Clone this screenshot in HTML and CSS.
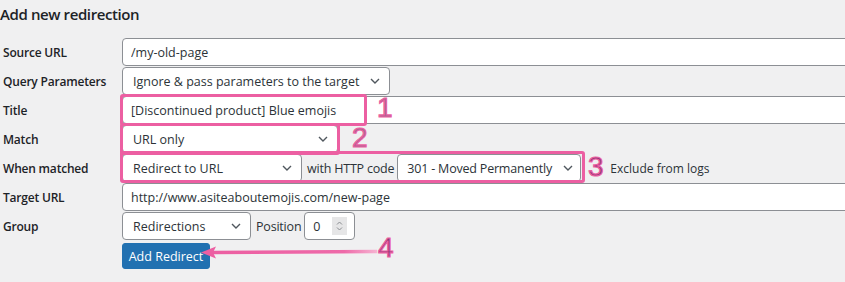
FILE: index.html
```
<!DOCTYPE html>
<html lang="en">
<head>
    <meta charset="UTF-8">
    <meta name="viewport" content="width=device-width, initial-scale=1.0">
    <title>Add new redirection</title>
    <link rel="stylesheet" href="styles.css">
</head>
<body>
    <div class="page">
        <h2 class="heading">Add new redirection</h2>

        <div class="form">
            <label class="label">Source URL</label>
            <div class="field"><input type="text" class="text wide" value="/my-old-page"></div>

            <label class="label">Query Parameters</label>
            <div class="field">
                <select class="select queryParams"><option>Ignore &amp; pass parameters to the target</option></select>
            </div>

            <label class="label">Title</label>
            <div class="field"><input type="text" class="text wide" value="[Discontinued product] Blue emojis"></div>

            <label class="label">Match</label>
            <div class="field">
                <select class="select matchType"><option>URL only</option></select>
            </div>

            <label class="label">When matched</label>
            <div class="field">
                <select class="select actionType"><option>Redirect to URL</option></select>
                <span class="inline">with HTTP code</span>
                <select class="select httpCode"><option>301 - Moved Permanently</option></select>
                <span class="exclude">Exclude from logs</span>
            </div>

            <label class="label">Target URL</label>
            <div class="field"><input type="text" class="text wide" value="http://www.asiteaboutemojis.com/new-page"></div>

            <label class="label">Group</label>
            <div class="field">
                <select class="select groupSelect"><option>Redirections</option></select>
                <span class="inline">Position</span>
                <div class="number">
                    <span>0</span>
                    <svg class="spinner" width="15" height="18" viewBox="0 0 15 18">
                        <rect width="15" height="18" fill="#e6e6e7"/>
                        <path d="M5 7.5 L7.5 5 L10 7.5" fill="none" stroke="#8a8d91" stroke-width="1"/>
                        <path d="M5 10.5 L7.5 13 L10 10.5" fill="none" stroke="#8a8d91" stroke-width="1"/>
                    </svg>
                </div>
            </div>

            <span></span>
            <div class="field buttonRow"><button class="button">Add Redirect</button></div>
        </div>

        <!-- annotations drawn over the form -->
        <div class="mark markTitle"></div>
        <div class="mark markMatch"></div>
        <div class="mark markAction"></div>
        <span class="num num1">1</span>
        <span class="num num2">2</span>
        <span class="num num3">3</span>
        <span class="num num4">4</span>
        <svg class="arrow" width="180" height="14" viewBox="0 0 180 14">
            <defs>
                <linearGradient id="fade" x1="0" x2="1" y1="0" y2="0">
                    <stop offset="0" stop-color="#ec5fa2"/>
                    <stop offset="0.8" stop-color="#ee6aa9"/>
                    <stop offset="1" stop-color="#f6b3d2"/>
                </linearGradient>
            </defs>
            <path d="M12 6.5 L176 5.5" stroke="url(#fade)" stroke-width="3.5" fill="none"/>
            <path d="M0 6.5 L15 0.5 L12 6.5 L15 12.5 Z" fill="#ec5fa2"/>
        </svg>
    </div>
</body>
</html>
```

FILE: styles.css
```
body {
    margin: 0;
    background-color: #f0f0f1;
    font-family: "Open Sans", "Noto Sans", sans-serif;
    color: #1d2327;
}

.page {
    position: relative;
    width: 845px;
    height: 282px;
    overflow: hidden;
}

.heading {
    margin: 0 0 10px 0;
    height: 28px;
    line-height: 28px;
    font-size: 15px;
    font-weight: 600;
    letter-spacing: -0.4px;
}

.form {
    display: grid;
    grid-template-columns: 122px 1fr;
    row-gap: 1px;
    align-items: center;
}

.label {
    padding-left: 3px;
    font-size: 12px;
    font-weight: 600;
    letter-spacing: -0.2px;
}

.field {
    display: flex;
    align-items: center;
    height: 28px;
}

.text,
.select {
    box-sizing: border-box;
    height: 28px;
    border: 1px solid #8c8f94;
    border-radius: 4px;
    background-color: #fff;
    font-family: inherit;
    font-size: 12.5px;
    color: #2c3338;
    padding: 0 8px;
    margin: 0;
}

.wide {
    width: 760px;
}

.select {
    -webkit-appearance: none;
    appearance: none;
    padding-left: 10px;
    padding-right: 24px;
    background-image: url("data:image/svg+xml,%3Csvg xmlns='http://www.w3.org/2000/svg' width='10' height='6' viewBox='0 0 10 6'%3E%3Cpath d='M1 1 L5 5 L9 1' fill='none' stroke='%2350575e' stroke-width='1.4'/%3E%3C/svg%3E");
    background-repeat: no-repeat;
    background-position: right 9px center;
}

.queryParams { width: 268px; }
.matchType { width: 216px; }
.actionType { width: 180px; }
.groupSelect { width: 129px; }

.httpCode {
    width: 184px;
    padding-left: 9px;
    padding-right: 16px;
    letter-spacing: -0.2px;
    background-position: right 7px center;
}

.inline {
    font-size: 12.5px;
    margin: 0 3px 0 5px;
    letter-spacing: -0.2px;
    color: #2c3338;
}

.exclude {
    font-size: 12px;
    margin-left: 29px;
    color: #2c3338;
}

.number {
    box-sizing: border-box;
    display: flex;
    align-items: center;
    justify-content: space-between;
    width: 51px;
    height: 28px;
    border: 1px solid #8c8f94;
    border-radius: 4px;
    background-color: #fff;
    padding: 0 7px 0 8px;
    font-size: 12.5px;
    color: #2c3338;
}

.buttonRow {
    height: 28px;
    padding-top: 2px;
    align-items: flex-start;
}

.button {
    height: 26px;
    width: 88px;
    padding: 0;
    border: 1px solid #2271b1;
    border-radius: 3px;
    background-color: #2271b1;
    color: #fff;
    font-family: inherit;
    font-size: 12.5px;
}

.mark {
    position: absolute;
    box-sizing: border-box;
    border: 3px solid #ec5fa2;
    border-radius: 3px;
}

.markTitle { left: 120px; top: 94px; width: 247px; height: 32px; }
.markMatch { left: 120px; top: 123px; width: 220px; height: 32px; }
.markAction { left: 120px; top: 151px; width: 465px; height: 32px; }

.num {
    position: absolute;
    font-family: "Liberation Sans", sans-serif;
    font-size: 28px;
    line-height: 28px;
    color: #8e3a76;
    -webkit-text-stroke: 1.2px #ec5fa2;
}

.num1 { left: 377px; top: 94px; color: #a9658f; }
.num2 { left: 352px; top: 124px; color: #a9658f; }
.num3 { left: 588px; top: 153px; }
.num4 { left: 378px; top: 234px; }

.arrow {
    position: absolute;
    left: 201px;
    top: 246px;
}
```
